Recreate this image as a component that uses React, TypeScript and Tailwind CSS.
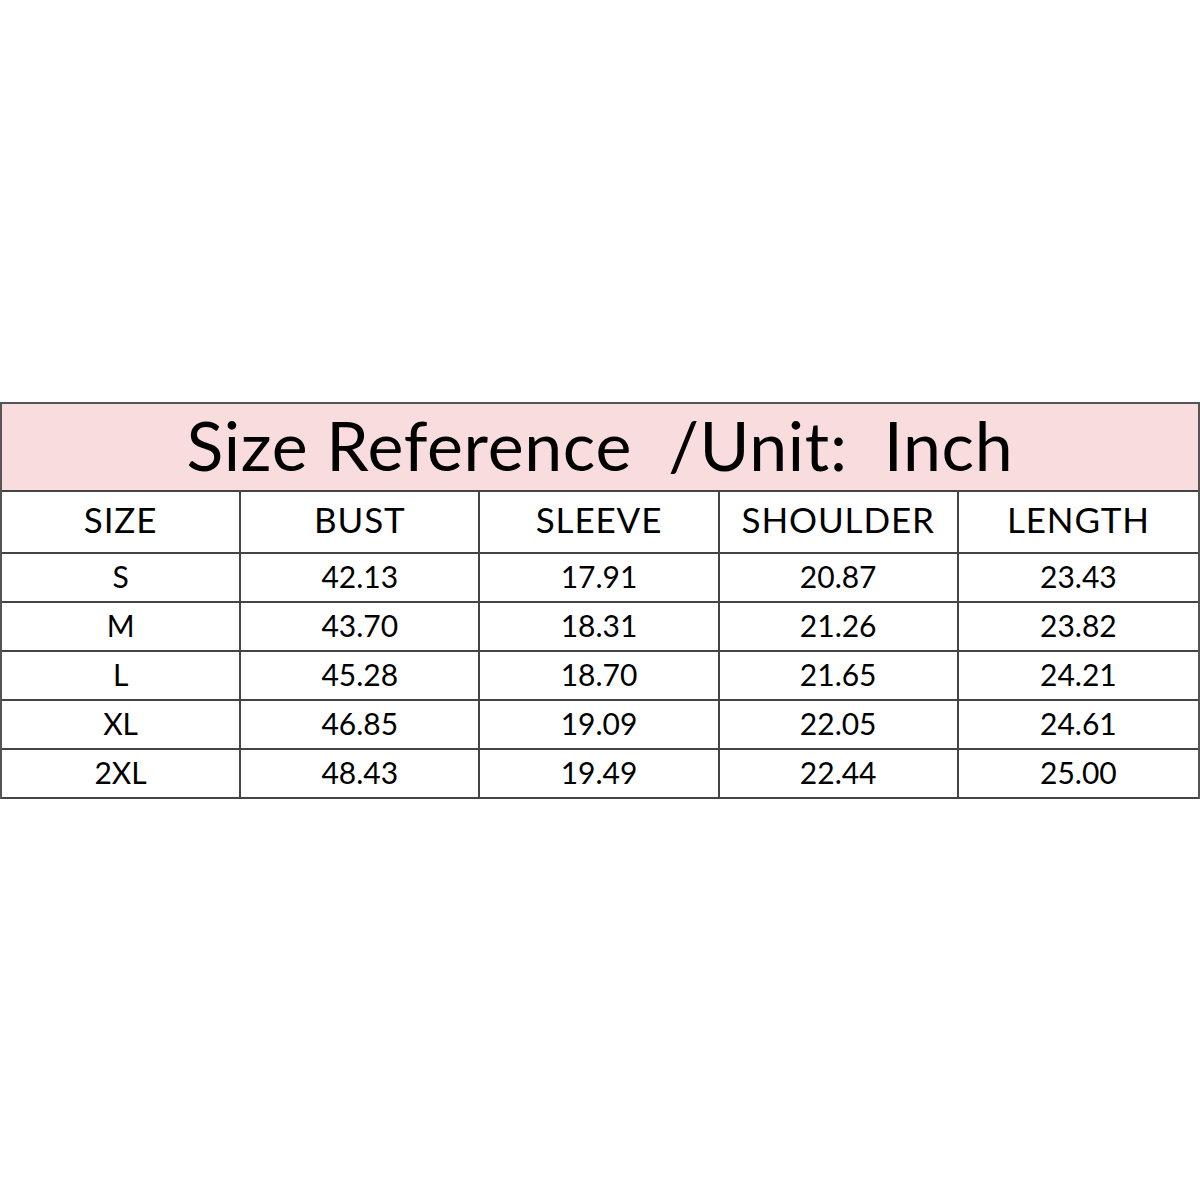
const headers = ["SIZE", "BUST", "SLEEVE", "SHOULDER", "LENGTH"]

const rows = [
  ["S", "42.13", "17.91", "20.87", "23.43"],
  ["M", "43.70", "18.31", "21.26", "23.82"],
  ["L", "45.28", "18.70", "21.65", "24.21"],
  ["XL", "46.85", "19.09", "22.05", "24.61"],
  ["2XL", "48.43", "19.49", "22.44", "25.00"],
]

export default function App() {
  return (
    <div
      className="flex h-[1200px] w-[1200px] items-center bg-white text-black"
      style={{ fontFamily: '"Comic Sans MS", Lato, "Open Sans", sans-serif' }}
    >
      <div className="w-full border-x-2 border-t-2 border-[#555]">
        <div className="flex h-[88px] items-center justify-center border-b-2 border-[#444] bg-[#f9dcdd] pb-1 text-[68px] leading-none tracking-[0.01em]">
          <span>Size Reference&nbsp;&nbsp;/Unit:&nbsp;&nbsp;Inch</span>
        </div>
        <div className="grid grid-cols-5 border-b-2 border-[#444]">
          {headers.map((h, i) => (
            <div
              key={h}
              className={`flex h-[60px] items-center justify-center pb-1 text-[35px] tracking-wide ${i < 4 ? "border-r-2 border-[#444]" : ""}`}
            >
              {h}
            </div>
          ))}
        </div>
        {rows.map((r) => (
          <div key={r[0]} className="grid grid-cols-5 border-b-2 border-[#444]">
            {r.map((c, i) => (
              <div
                key={i}
                className={`flex h-[47px] items-center justify-center pb-0.5 text-[30px] ${i < 4 ? "border-r-2 border-[#444]" : ""}`}
              >
                {c}
              </div>
            ))}
          </div>
        ))}
      </div>
    </div>
  )
}
